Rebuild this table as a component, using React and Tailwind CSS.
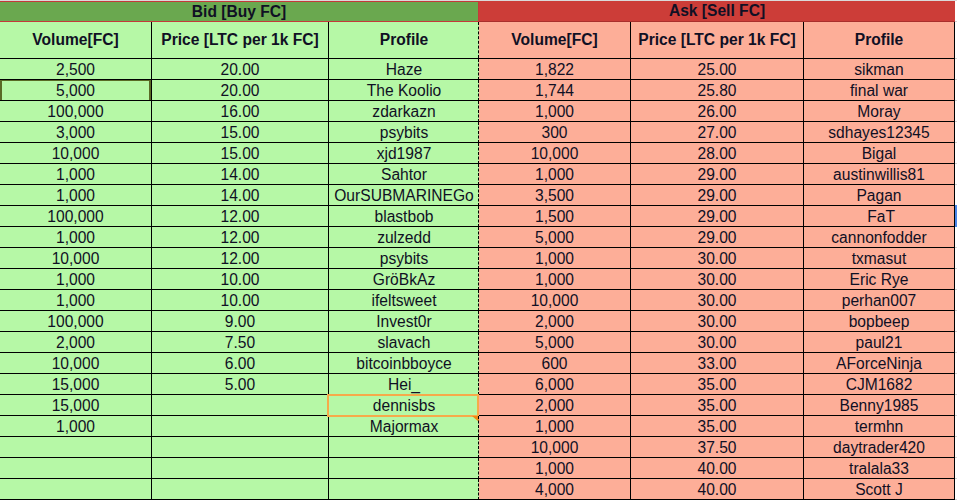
import React from 'react';

const bids = [
  ['2,500', '20.00', 'Haze'],
  ['5,000', '20.00', 'The Koolio'],
  ['100,000', '16.00', 'zdarkazn'],
  ['3,000', '15.00', 'psybits'],
  ['10,000', '15.00', 'xjd1987'],
  ['1,000', '14.00', 'Sahtor'],
  ['1,000', '14.00', 'OurSUBMARINEGo'],
  ['100,000', '12.00', 'blastbob'],
  ['1,000', '12.00', 'zulzedd'],
  ['10,000', '12.00', 'psybits'],
  ['1,000', '10.00', 'GröBkAz'],
  ['1,000', '10.00', 'ifeltsweet'],
  ['100,000', '9.00', 'Invest0r'],
  ['2,000', '7.50', 'slavach'],
  ['10,000', '6.00', 'bitcoinbboyce'],
  ['15,000', '5.00', 'Hei_'],
  ['15,000', '', 'dennisbs'],
  ['1,000', '', 'Majormax'],
  ['', '', ''],
  ['', '', ''],
  ['', '', ''],
];

const asks = [
  ['1,822', '25.00', 'sikman'],
  ['1,744', '25.80', 'final war'],
  ['1,000', '26.00', 'Moray'],
  ['300', '27.00', 'sdhayes12345'],
  ['10,000', '28.00', 'Bigal'],
  ['1,000', '29.00', 'austinwillis81'],
  ['3,500', '29.00', 'Pagan'],
  ['1,500', '29.00', '\u00a0FaT'],
  ['5,000', '29.00', 'cannonfodder'],
  ['1,000', '30.00', 'txmasut'],
  ['1,000', '30.00', 'Eric Rye'],
  ['10,000', '30.00', 'perhan007'],
  ['2,000', '30.00', 'bopbeep'],
  ['5,000', '30.00', 'paul21'],
  ['600', '33.00', 'AForceNinja'],
  ['6,000', '35.00', 'CJM1682'],
  ['2,000', '35.00', 'Benny1985'],
  ['1,000', '35.00', 'termhn'],
  ['10,000', '37.50', 'daytrader420'],
  ['1,000', '40.00', 'tralala33'],
  ['4,000', '40.00', 'Scott J'],
];

// every grid cell is 20px of content + 1px black rule below
const cell = 'h-[21px] pt-px flex items-center justify-center border-b border-black whitespace-nowrap overflow-hidden';

export default function App() {
  return (
    <div
      className="w-[957px] h-[500px] overflow-hidden bg-white text-[#101024] text-[15.6px] leading-none"
      style={{ fontFamily: '"Liberation Sans", Arial, sans-serif' }}
    >
      <div className="h-px bg-[#dadada]" />
      <div className="flex">
        {/* Bid side */}
        <div className="w-[479px] bg-[#b6f8a6]">
          <div className="h-[21px] bg-[#6aa84f] border-y border-r border-[#c4393a] flex items-center justify-center font-bold">
            Bid [Buy FC]
          </div>
          <div className="flex h-[37px] font-bold">
            <div className="w-[152px] flex items-center justify-center border-b border-r border-black">Volume[FC]</div>
            <div className="w-[177px] flex items-center justify-center border-b border-r border-black">Price [LTC per 1k FC]</div>
            <div className="w-[150px] flex items-center justify-center border-b border-black relative">
              Profile
              <div className="absolute right-0 top-0 bottom-0 border-r border-dashed border-black" />
            </div>
          </div>
          {bids.map((r, i) => (
            <div key={i} className="flex">
              <div className={cell + ' w-[152px] border-r relative'}>
                {r[0]}
                {i === 1 && <div className="absolute left-0 top-[-1px] w-[151px] h-[23px] border-2 border-[#5a6a26]" />}
              </div>
              <div className={cell + ' w-[177px] border-r'}>{r[1]}</div>
              <div className={cell + ' w-[150px] relative overflow-visible'}>
                {r[2]}
                <div className="absolute right-0 top-0 bottom-[-1px] border-r border-dashed border-black" />
                {i === 16 && (
                  <>
                    <div className="absolute left-[-2px] top-[-1px] w-[152px] h-[23px] border-2 border-[#f6aa4a]" />
                    <div className="absolute right-0 bottom-[-7px] w-0 h-0 border-l-[7px] border-l-transparent border-t-[6px] border-t-[#f08a16]" />
                  </>
                )}
              </div>
            </div>
          ))}
        </div>

        {/* Ask side */}
        <div className="w-[476px] bg-[#fdae98]">
          <div className="h-[21px] bg-[#cc3d38] border-b border-[#a92f2c] flex items-center justify-center font-bold">
            Ask [Sell FC]
          </div>
          <div className="flex h-[37px] font-bold">
            <div className="w-[152px] flex items-center justify-center border-b border-r border-black">Volume[FC]</div>
            <div className="w-[173px] flex items-center justify-center border-b border-r border-black">Price [LTC per 1k FC]</div>
            <div className="w-[151px] flex items-center justify-center border-b border-r border-black">Profile</div>
          </div>
          {asks.map((r, i) => (
            <div key={i} className="flex">
              <div className={cell + ' w-[152px] border-r'}>{r[0]}</div>
              <div className={cell + ' w-[173px] border-r'}>{r[1]}</div>
              <div className={cell + ' w-[151px] border-r relative overflow-visible'}>
                {r[2]}
                {i === 7 && <div className="absolute right-[-3px] top-[-1px] bottom-[-1px] w-[2px] bg-[#4a86e8]" />}
              </div>
            </div>
          ))}
        </div>

        {/* sheet gridlines past the table */}
        <div className="flex-1">
          <div className="h-[21px] border-b border-[#d4d4d4]" />
          <div className="h-[37px] border-b border-[#d4d4d4]" />
          {asks.map((_, i) => (
            <div key={i} className="h-[21px] border-b border-[#d4d4d4]" />
          ))}
        </div>
      </div>
    </div>
  );
}
